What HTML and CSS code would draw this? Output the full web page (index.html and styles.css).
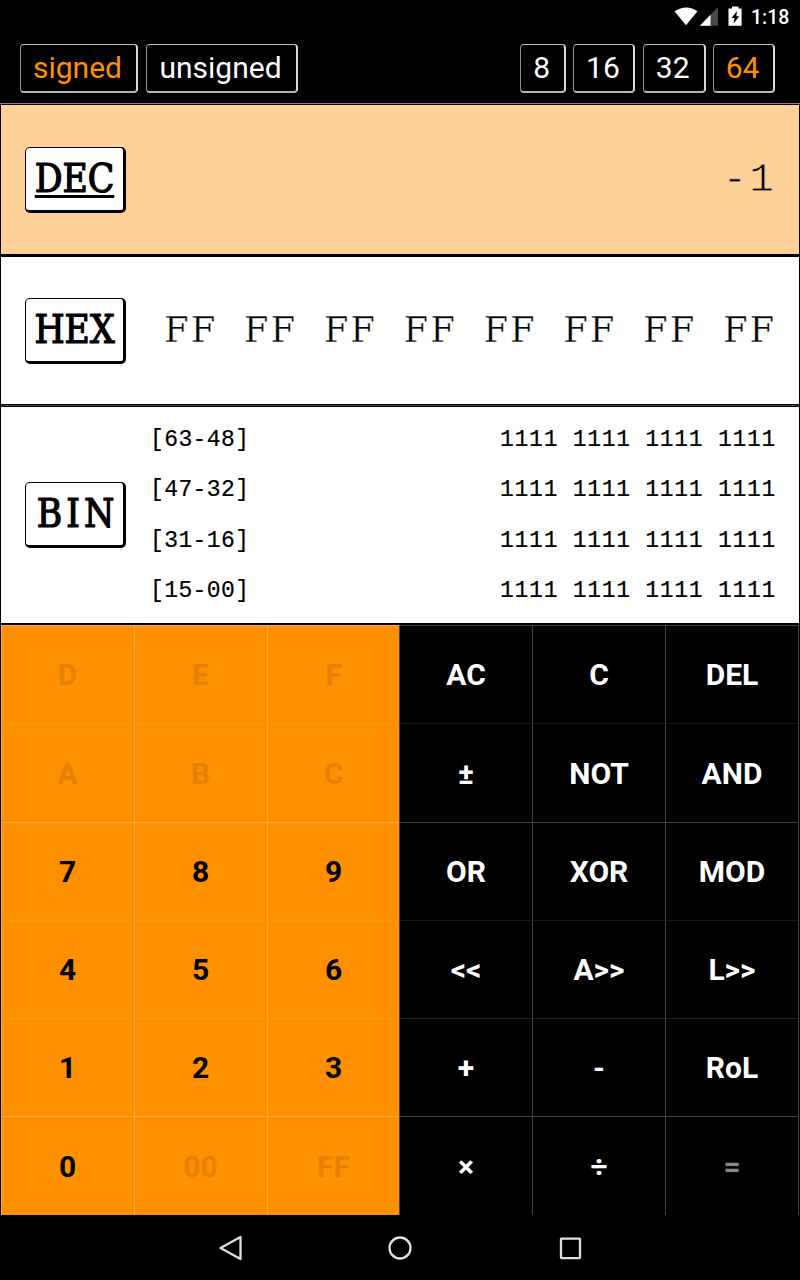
FILE: index.html
```
<!DOCTYPE html>
<html lang="en">
<head>
<meta charset="utf-8">
<title>Programmer calculator</title>
<link rel="stylesheet" href="styles.css">
</head>
<body>
<div class="status">
  <svg class="status-icons" width="70" height="20" viewBox="0 0 70 20">
    <path d="M-.5 4.300Q11.500-3.300 22.500 4.300L11 18.300Z" fill="#fff"/>
    <path d="M43 0V18.700H24.800Z" fill="#484848"/>
    <path d="M35.500 7.700V18.700H24.800Z" fill="#fff"/>
    <path d="M57-.5h6.500v2h3.100v17.200H53.500V1.500h3.500Z" fill="#fff"/>
    <path d="M62 4L56.500 11h3l-1 5.500L64.300 9.200h-3Z" fill="#000"/>
  </svg>
  <span class="clock">1:18</span>
</div>
<div class="modes">
  <div class="group">
    <button class="mode signed on">signed</button>
    <button class="mode unsigned">unsigned</button>
  </div>
  <div class="group bits">
    <button class="mode b8">8</button>
    <button class="mode b16">16</button>
    <button class="mode b32">32</button>
    <button class="mode b64 on">64</button>
  </div>
</div>
<div class="display">
  <div class="row dec">
    <button class="base current"><span class="base-text">DEC</span></button>
    <span class="value">-1</span>
  </div>
  <div class="row hex">
    <button class="base"><span class="base-text">HEX</span></button>
    <div class="bytes"><span>FF</span><span>FF</span><span>FF</span><span>FF</span><span>FF</span><span>FF</span><span>FF</span><span>FF</span></div>
  </div>
  <div class="row bin">
    <button class="base"><span class="base-text bin-text">BIN</span></button>
    <div class="words">
      <div class="word"><span class="range">[63-48]</span><span>1111 1111 1111 1111</span></div>
      <div class="word"><span class="range">[47-32]</span><span>1111 1111 1111 1111</span></div>
      <div class="word"><span class="range">[31-16]</span><span>1111 1111 1111 1111</span></div>
      <div class="word"><span class="range">[15-00]</span><span>1111 1111 1111 1111</span></div>
    </div>
  </div>
</div>
<div class="pads">
  <div class="pad digits">
    <button class="key off">D</button><button class="key off">E</button><button class="key off">F</button>
    <button class="key off">A</button><button class="key off">B</button><button class="key off">C</button>
    <button class="key">7</button><button class="key">8</button><button class="key">9</button>
    <button class="key">4</button><button class="key">5</button><button class="key">6</button>
    <button class="key">1</button><button class="key">2</button><button class="key">3</button>
    <button class="key">0</button><button class="key off">00</button><button class="key off">FF</button>
  </div>
  <div class="pad ops">
    <button class="key">AC</button><button class="key">C</button><button class="key">DEL</button>
    <button class="key">±</button><button class="key">NOT</button><button class="key">AND</button>
    <button class="key">OR</button><button class="key">XOR</button><button class="key">MOD</button>
    <button class="key">&lt;&lt;</button><button class="key">A&gt;&gt;</button><button class="key">L&gt;&gt;</button>
    <button class="key">+</button><button class="key">-</button><button class="key">RoL</button>
    <button class="key">×</button><button class="key">÷</button><button class="key off">=</button>
  </div>
</div>
<div class="nav">
  <svg width="24" height="26" viewBox="0 0 24 26"><path d="M2.500 13L22.500 2V24Z"/></svg>
  <svg width="24" height="26" viewBox="0 0 24 26"><circle cx="12" cy="13" r="10.500"/></svg>
  <svg width="24" height="26" viewBox="0 0 24 26"><rect x="3" y="3.600" width="19" height="19.500" rx=".5"/></svg>
</div>
</body>
</html>
```
FILE: styles.css
```
* { box-sizing: border-box; }
body {
  margin: 0;
  width: 800px;
  height: 1280px;
  overflow: hidden;
  background: #000;
  display: flex;
  flex-direction: column;
  font-family: Roboto, sans-serif;
}
button {
  margin: 0;
  padding: 0;
  font: inherit;
  color: inherit;
  background: none;
  border: 0;
}
.status {
  height: 34px;
  flex: none;
  display: flex;
  justify-content: flex-end;
  align-items: center;
  padding-right: 11px;
  gap: 6px;
  color: #fff;
}
.status-icons { overflow: visible; margin-top: -1px; }
.clock { font-size: 19.500px; font-weight: 500; width: 38px; white-space: nowrap; }
.modes {
  height: 69px;
  flex: none;
  display: flex;
  justify-content: space-between;
  padding: 9.500px 25px 0 20px;
}
.group { display: flex; gap: 8px; }
.mode {
  height: 49px;
  border: 1px solid;
  border-width: 1px 2px 2px 1px;
  border-color: #c4c4c4 #d8d8d8 #b8b8b8 #909090;
  border-radius: 4px;
  color: #fff;
  font-size: 30px;
  line-height: 45px;
  padding: 0 2px 1px 0;
}
.on { color: #ff9000; }
.signed { width: 118px; }
.unsigned { width: 152px; }
.b8 { width: 46px; }
.b16 { width: 62px; }
.b32 { width: 63px; }
.b64 { width: 62px; }
.bits { gap: 7.300px; }
.display {
  height: 522px;
  flex: none;
  border-top: 1px solid #8c8078;
  padding: 1px 1px 0;
  font-family: "Liberation Mono", monospace;
  color: #000;
}
.row {
  display: flex;
  justify-content: space-between;
  align-items: center;
  padding: 0 25px 0 24px;
  background: #fff;
}
.dec { height: 149px; background: #ffd199; margin-bottom: 3px; }
.hex { height: 147px; }
.bin {
  height: 219px;
  border-top: 3px double #000;
  padding-right: 24px;
  background: linear-gradient(#444 3px, #fff 3px) border-box;
}
.base {
  width: 101px;
  height: 66px;
  flex: none;
  border: 1px solid #000;
  border-width: 1px 3px 3px 1px;
  border-radius: 5px;
  background: #fff;
  font: 38.500px/56px "DejaVu Serif Condensed", "DejaVu Serif", serif;
  font-stretch: condensed;
  text-align: center;
}
.base-text {
  display: inline-block;
  -webkit-text-stroke: 1.200px #000;
}
.bin-text { letter-spacing: 4px; margin-right: -6px; }
.current .base-text {
  text-decoration: underline;
  text-decoration-thickness: 3px;
  text-underline-offset: 3px;
  text-decoration-skip-ink: none;
}
.value {
  font-size: 41px;
  letter-spacing: 2.100px;
  margin-right: -2px;
  padding-top: 1px;
  -webkit-text-stroke: .8px #ffd199;
}
.bytes {
  display: flex;
  width: 610px;
  justify-content: space-between;
  font: 35.500px/60px "DejaVu Serif", serif;
  -webkit-text-stroke: .4px #fff;
  margin-top: -1px;
}
.bytes span { width: 51px; letter-spacing: 2px; white-space: nowrap; }
.words {
  width: 626px;
  height: 201px;
  display: grid;
  grid-template-rows: repeat(4, 1fr);
  font-size: 23px;
  margin-top: 1px;
}
.word {
  display: flex;
  justify-content: space-between;
  align-items: center;
  letter-spacing: .720px;
  padding-left: 1px;
  margin-right: -1px;
  -webkit-text-stroke: .2px #000;
}
.range { letter-spacing: .4px; }
.pads { height: 590px; flex: none; display: flex; padding-left: 1px; }
.pad {
  flex: none;
  display: grid;
  grid-template-columns: repeat(3, 133px);
  grid-template-rows: 98px 99px 98px 98px 98px 99px;
}
.key {
  border: 0 solid;
  border-width: 1px 0 0 1px;
  font-size: 30px;
  font-weight: 700;
}
.digits { width: 398px; overflow: hidden; background: #ff9000; color: #000; }
.digits .key { border-color: #ffa940; padding-right: 1px; }
.digits .off { color: #e68200; }
.ops { width: 400px; border-right: 1px solid #444; color: #fff; }
.ops .key { border-color: #444; }
.pad .key:nth-child(n+4):nth-child(-n+6),
.pad .key:nth-child(n+16) { padding-top: 1px; }
.ops .key:nth-child(n+4):nth-child(-n+6),
.ops .key:nth-child(n+10):nth-child(-n+12) { border-top-color: #161616; }
.ops .key:nth-child(n+13):nth-child(-n+15) { border-top-color: #222; }
.ops .off { color: #888; }
.digits .key:nth-child(n+4):nth-child(-n+6),
.digits .key:nth-child(n+10):nth-child(-n+15) { border-top-color: #ff981a; }
.nav {
  height: 65px;
  display: flex;
  justify-content: space-between;
  align-items: center;
  padding: 1px 218px 0 218px;
}
.nav svg { fill: none; stroke: #e0e0e0; stroke-width: 2.300; stroke-linejoin: round; }
```
